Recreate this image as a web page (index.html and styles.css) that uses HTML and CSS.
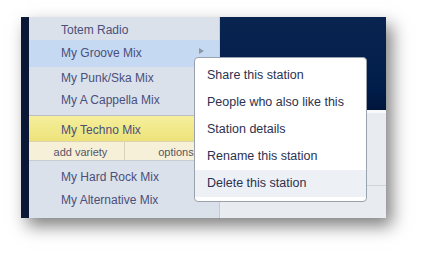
FILE: index.html
```html
<!DOCTYPE html>
<html>

<head>
  <title>Stations</title>
  <meta name="viewport" content="width=device-width, initial-scale=1">
  <link rel="stylesheet" href="styles.css">
</head>

<body>
  <div id="frame">
    <div class="stripe"></div>
    <div id="station-list">
      <div class="station totem">Totem Radio</div>
      <div class="station groove">My Groove Mix<span class="arrow"></span></div>
      <div class="station punk">My Punk/Ska Mix</div>
      <div class="station cappella">My A Cappella Mix</div>
      <div class="station current">My Techno Mix</div>
      <div class="station-tools">
        <div class="tool">add variety</div>
        <div class="tool">options</div>
      </div>
      <div class="station hard">My Hard Rock Mix</div>
      <div class="station">My Alternative Mix</div>
    </div>
    <div id="side">
      <div class="banner"></div>
      <div class="lower">
        <div class="lower-top"></div>
        <div class="lower-bottom"></div>
      </div>
    </div>

    <!-- menu de contexto da estação -->
    <div id="context-menu">
      <div class="menu-item">Share this station</div>
      <div class="menu-item">People who also like this</div>
      <div class="menu-item">Station details</div>
      <div class="menu-item">Rename this station</div>
      <div class="menu-item hover">Delete this station</div>
    </div>
  </div>
</body>

</html>
```

FILE: styles.css
```css
body {
  margin: 0;
  padding: 0;
  background: #ffffff;
  font-family: "Liberation Sans", Arial, sans-serif;
  width: 425px;
  height: 255px;
  overflow: hidden;
}

#frame {
  position: relative;
  display: flex;
  margin: 17px 0 0 21px;
  width: 365px;
  height: 201px;
  box-shadow: 6px 8px 16px rgba(0, 0, 0, 0.5);
}

.stripe {
  width: 8px;
  background: #0a1836;
}

/* LISTA DE ESTAÇÕES */
#station-list {
  width: 190px;
  background: #dbe1ea;
  border-right: 1px solid #c3cad4;
}

.station {
  height: 23px;
  line-height: 26px;
  padding-left: 32px;
  font-size: 12px;
  color: #4a4f7c;
  position: relative;
}

.groove {
  height: 27px;
  line-height: 27px;
  background: #c6d9f3;
}

.punk {
  height: 22px;
  line-height: 22px;
}

.cappella {
  height: 26px;
  line-height: 23px;
  border-bottom: 1px solid #b9bec4;
}

.current {
  height: 25px;
  line-height: 29px;
  background: linear-gradient(#f6ef9c, #ede27a);
}

.hard {
  margin-top: 3px;
}

.arrow {
  position: absolute;
  left: 170px;
  top: 8px;
  border-left: 5px solid #8e96a3;
  border-top: 3px solid transparent;
  border-bottom: 3px solid transparent;
}

.station-tools {
  display: flex;
  height: 18px;
  background: #f6f0d8;
  border-top: 1px solid #dcd4b0;
  border-bottom: 1px solid #c9cdd2;
}

.tool {
  box-sizing: border-box;
  width: 104px;
  padding-left: 8px;
  line-height: 20px;
  text-align: center;
  font-size: 11px;
  color: #555566;
}

.tool + .tool {
  border-left: 1px solid #d9d2b6;
}

/* LADO DIREITO */
#side {
  flex: 1;
  display: flex;
  flex-direction: column;
}

.banner {
  height: 93px;
  background: linear-gradient(#0a2450, #001d49 80%, #01153a);
}

.lower {
  flex: 1;
  background: #e8ecf1;
  border-top: 3px solid #f7f9fb;
}

.lower-top {
  height: 72px;
  border-bottom: 1px solid #cdd3da;
}

/* MENU DE CONTEXTO */
#context-menu {
  position: absolute;
  left: 173px;
  top: 40px;
  width: 171px;
  padding: 4px 0 4px;
  background: #ffffff;
  border: 1px solid #9aa2ad;
  border-radius: 4px;
}

.menu-item {
  height: 27px;
  line-height: 27px;
  padding-left: 12px;
  font-size: 12.5px;
  color: #2c3150;
}

.menu-item.hover {
  background: #edf0f5;
}
```
